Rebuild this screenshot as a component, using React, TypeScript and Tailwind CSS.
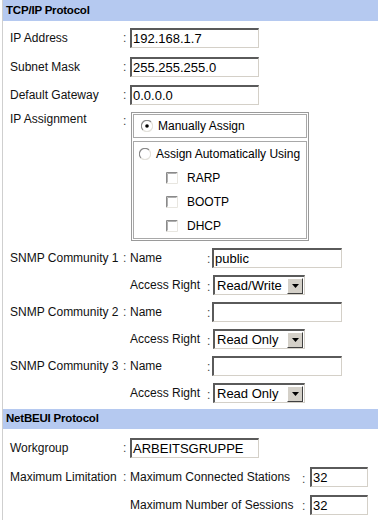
import React from "react";

function TextBox({ value, cls }: { value: string; cls: string }) {
  return (
    <div
      className={
        "h-[20px] bg-white border-t-2 border-l-2 border-r border-b border-t-[#5a5a5a] border-l-[#5a5a5a] border-r-[#d4d0c8] border-b-[#d4d0c8] flex items-center pl-[1px] text-[13px] text-black leading-none " +
        cls
      }
    >
      {value}
    </div>
  );
}

function Select({ value }: { value: string }) {
  return (
    <div className="ml-[1px] w-[92px] h-[20px] bg-white border-t-2 border-l-2 border-r border-b border-t-[#5a5a5a] border-l-[#5a5a5a] border-r-[#d4d0c8] border-b-[#d4d0c8] flex items-center text-[13px] text-black leading-none">
      <span className="flex-1 pl-[2px] whitespace-nowrap">{value}</span>
      <div className="w-[16px] h-[16px] mr-[1px] bg-[#d4d0c8] border-t border-l border-r border-b border-t-white border-l-white border-r-[#404040] border-b-[#404040] flex items-center justify-center">
        <svg width="7" height="4" viewBox="0 0 7 4">
          <path d="M0 0h7L3.5 4z" fill="#000" />
        </svg>
      </div>
    </div>
  );
}

function Radio({ checked }: { checked?: boolean }) {
  return (
    <svg width="12" height="12" viewBox="0 0 12 12" className="shrink-0">
      <circle cx="6" cy="6" r="5.5" fill="#fff" />
      <path d="M10 2A5.5 5.5 0 0 0 2 10" stroke="#8a8a8a" strokeWidth="1.2" fill="none" />
      <path d="M2 10A5.5 5.5 0 0 0 10 2" stroke="#e4e2dc" strokeWidth="1.2" fill="none" />
      {checked && <circle cx="6" cy="6" r="1.8" fill="#000" />}
    </svg>
  );
}

function Check() {
  return (
    <svg width="12" height="12" viewBox="0 0 12 12" className="shrink-0">
      <rect x="0" y="0" width="12" height="12" fill="#fff" />
      <path d="M0.5 11.5V0.5H11.5" stroke="#8a8a8a" strokeWidth="1" fill="none" />
      <path d="M1.5 10.5V1.5H10.5" stroke="#b0b0b0" strokeWidth="1" fill="none" />
      <path d="M0.5 11.5H11.5V0.5" stroke="#e8e6e0" strokeWidth="1" fill="none" />
    </svg>
  );
}

function Colon() {
  return <span className="text-[#444]">:</span>;
}

export default function App() {
  return (
    <div className="w-[378px] h-[520px] bg-white overflow-hidden font-['Liberation_Sans',Arial,sans-serif] text-[12px] text-[#111] leading-none">
      <div className="ml-[2px] h-full border-l border-[#cfcfcf] flex flex-col">
        <div className="h-[21px] bg-[#b5c9f0] flex items-center pl-[3px] font-bold text-black text-[11.5px] tracking-[-0.2px]">
          TCP/IP Protocol
        </div>

        <div className="pl-[7px] flex flex-col">
          <div className="mt-[7px] h-[20px] flex items-center">
            <div className="w-[113px]">IP Address</div>
            <div className="w-[7px]"><Colon /></div>
            <TextBox value="192.168.1.7" cls="w-[129px]" />
          </div>
          <div className="mt-[9px] h-[20px] flex items-center">
            <div className="w-[113px]">Subnet Mask</div>
            <div className="w-[7px]"><Colon /></div>
            <TextBox value="255.255.255.0" cls="w-[129px]" />
          </div>
          <div className="mt-[8px] h-[20px] flex items-center">
            <div className="w-[113px]">Default Gateway</div>
            <div className="w-[7px]"><Colon /></div>
            <TextBox value="0.0.0.0" cls="w-[129px]" />
          </div>

          <div className="mt-[7px] flex items-start">
            <div className="w-[113px] pt-[1px]">IP Assignment</div>
            <div className="w-[8px] pt-[3px]"><Colon /></div>
            <div className="w-[178px] h-[129px] border border-[#9a9a9a] p-[1px] flex flex-col gap-[3px]">
              <div className="h-[24px] border border-[#a8a8a8] flex items-center pl-[7px] gap-[5px]">
                <Radio checked />
                <span className="text-black">Manually Assign</span>
              </div>
              <div className="flex-1 border border-[#a8a8a8] flex flex-col">
                <div className="h-[24px] flex items-center pl-[5px] gap-[5px]">
                  <Radio />
                  <span className="text-black">Assign Automatically Using</span>
                </div>
                {["RARP", "BOOTP", "DHCP"].map((t) => (
                  <div key={t} className="h-[24px] flex items-center pl-[32px] gap-[9px]">
                    <Check />
                    <span className="text-black">{t}</span>
                  </div>
                ))}
              </div>
            </div>
          </div>

          {[1, 2, 3].map((n) => (
            <React.Fragment key={n}>
              <div className="mt-[7px] h-[20px] flex items-center">
                <div className="w-[113px] whitespace-nowrap">SNMP Community {n}</div>
                <div className="w-[7px]"><Colon /></div>
                <div className="w-[77px]">Name</div>
                <div className="w-[5px] pt-[2px]"><Colon /></div>
                <TextBox value={n === 1 ? "public" : ""} cls="w-[130px]" />
              </div>
              <div className="mt-[7px] h-[20px] flex items-center">
                <div className="w-[120px]" />
                <div className="w-[77px]">Access Right</div>
                <div className="w-[5px] pt-[3px]"><Colon /></div>
                <Select value={n === 1 ? "Read/Write" : "Read Only"} />
              </div>
            </React.Fragment>
          ))}
        </div>

        <div className="mt-[6px] h-[20px] bg-[#b5c9f0] flex items-center pl-[3px] font-bold text-black text-[11.5px] tracking-[-0.2px]">
          NetBEUI Protocol
        </div>

        <div className="pl-[7px] flex flex-col">
          <div className="mt-[9px] h-[20px] flex items-center">
            <div className="w-[113px]">Workgroup</div>
            <div className="w-[7px]"><Colon /></div>
            <TextBox value="ARBEITSGRUPPE" cls="w-[129px]" />
          </div>
          <div className="mt-[9px] h-[20px] flex items-center">
            <div className="w-[113px] whitespace-nowrap">Maximum Limitation</div>
            <div className="w-[7px]"><Colon /></div>
            <div className="w-[172px] whitespace-nowrap">Maximum Connected Stations</div>
            <div className="w-[8px] pt-[3px]"><Colon /></div>
            <TextBox value="32" cls="w-[58px]" />
          </div>
          <div className="mt-[8px] h-[20px] flex items-center">
            <div className="w-[120px]" />
            <div className="w-[172px] whitespace-nowrap">Maximum Number of Sessions</div>
            <div className="w-[8px] pt-[2px]"><Colon /></div>
            <TextBox value="32" cls="w-[58px]" />
          </div>
        </div>
      </div>
    </div>
  );
}
